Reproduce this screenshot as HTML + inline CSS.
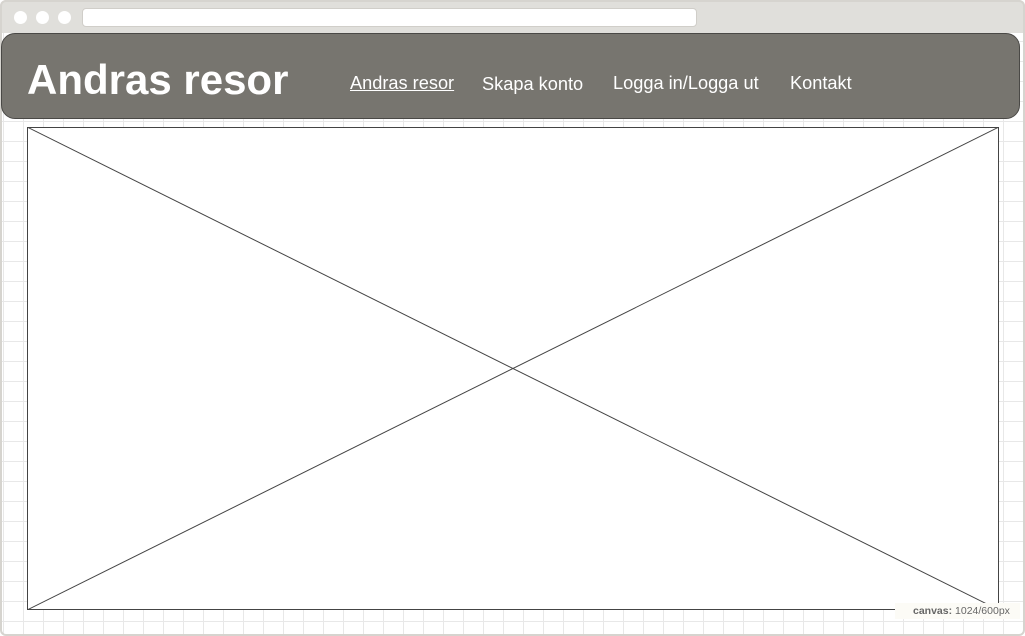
<!DOCTYPE html>
<html><head><meta charset="utf-8"><style>
*{margin:0;padding:0;box-sizing:border-box}
body{width:1025px;height:636px;overflow:hidden;background:#fff;font-family:"Liberation Sans",sans-serif;position:relative}
.frame{position:absolute;left:0;top:0;width:1025px;height:636px;border:2px solid #d6d4cf;border-radius:6px;
background-color:#fff;
background-image:linear-gradient(#e8e8e8 1px,transparent 1px),linear-gradient(90deg,#e8e8e8 1px,transparent 1px);
background-size:20px 20px;background-position:1px -1px}
.top{position:absolute;left:0;top:0;width:1025px;height:33px;background:#e0dfdb;border-radius:6px 6px 0 0;border:2px solid #d6d4cf;border-bottom:none}
.dot{position:absolute;top:9px;width:13px;height:13px;border-radius:50%;background:#fff}
.url{position:absolute;left:80px;top:6px;width:615px;height:19px;background:#fff;border-radius:4px;border:1px solid #d0cec9}
.hdr{position:absolute;left:1px;top:33px;width:1019px;height:86px;background:#77756f;border:1px solid #4a4946;border-radius:14px}
h1{position:absolute;left:27px;top:55px;font-size:42px;font-weight:bold;color:#fff;line-height:50px}
.nav{position:absolute;top:72px;font-size:18.2px;color:#fff;line-height:22px}
.box{position:absolute;left:27px;top:127px;width:972px;height:483px;background:#fff;border:1px solid #444}
.cv{position:absolute;left:895px;top:603px;width:125px;height:16px;background:#fcfbf6;font-size:10.5px;color:#666;padding-left:18px;line-height:17px}
</style></head><body>
<div class="frame"></div>
<div class="top"><div class="dot" style="left:12px"></div><div class="dot" style="left:34px"></div><div class="dot" style="left:56px"></div><div class="url"></div></div>
<div class="hdr"></div>
<h1>Andras resor</h1>
<div class="nav" style="left:350px;text-decoration:underline">Andras resor</div>
<div class="nav" style="left:482px;top:73px">Skapa konto</div>
<div class="nav" style="left:613px">Logga in/Logga ut</div>
<div class="nav" style="left:790px">Kontakt</div>
<div class="box"><svg width="972" height="483" style="position:absolute;left:-1px;top:-1px"><line x1="0" y1="0" x2="972" y2="483" stroke="#444" stroke-width="1"/><line x1="972" y1="0" x2="0" y2="483" stroke="#444" stroke-width="1"/></svg></div>
<div class="cv"><b>canvas:</b> 1024/600px</div>
</body></html>
